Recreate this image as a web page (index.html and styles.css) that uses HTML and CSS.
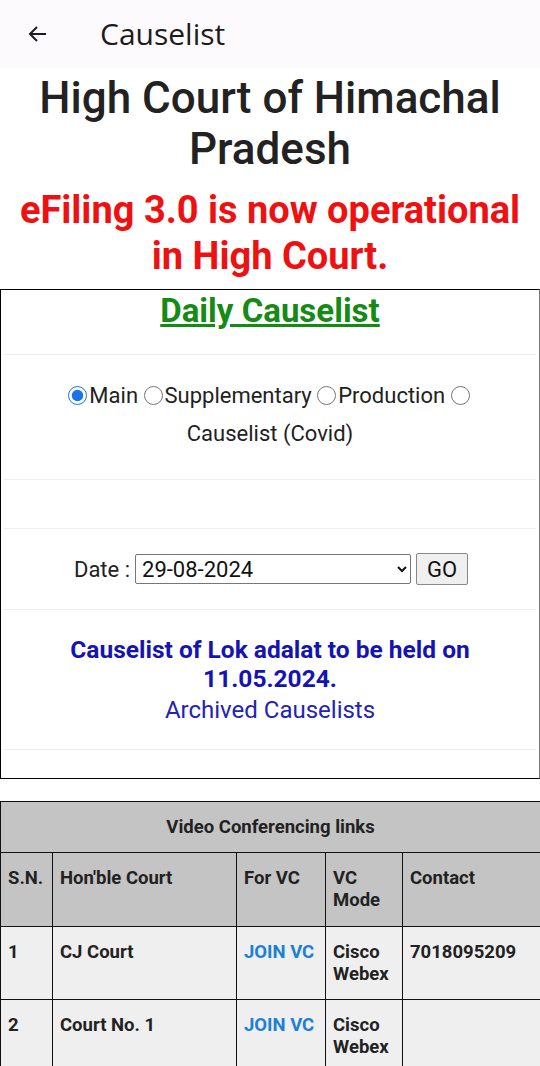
FILE: index.html
```html
<!DOCTYPE html>
<html>
<head>
<meta charset="utf-8">
<link rel="stylesheet" href="styles.css">
</head>
<body>
<div class="appbar">
  <svg class="back" width="24" height="24" viewBox="0 0 24 24"><path d="M20 12H5M11 5l-7 7 7 7" fill="none" stroke="#1d1b20" stroke-width="2"/></svg>
  <span class="apptitle">Causelist</span>
</div>
<h1 class="court">High Court of Himachal Pradesh</h1>
<h2 class="notice">eFiling 3.0 is now operational in High Court.</h2>
<div class="panel">
  <div class="row r-title"><a class="daily">Daily Causelist</a></div>
  <div class="row r-radio">
    <input type="radio" name="t" checked>Main <input type="radio" name="t">Supplementary <input type="radio" name="t">Production <input type="radio" name="t"> <span class="nw">Causelist (Covid)</span>
  </div>
  <div class="row r-empty"></div>
  <div class="row r-date">
    <span class="dlabel">Date :</span>
    <select class="dsel"><option>29-08-2024</option></select>
    <button class="go">GO</button>
  </div>
  <div class="row r-lok">
    <div class="lok">Causelist of Lok adalat to be held on 11.05.2024.</div>
    <div class="arch">Archived Causelists</div>
  </div>
  <div class="row r-end"></div>
</div>
<table class="vc">
  <colgroup><col class="c1"><col class="c2"><col class="c3"><col class="c4"><col class="c5"></colgroup>
  <tr class="cap"><th colspan="5">Video Conferencing links</th></tr>
  <tr class="head"><th>S.N.</th><th>Hon'ble Court</th><th>For VC</th><th>VC Mode</th><th>Contact</th></tr>
  <tr><td>1</td><td>CJ Court</td><td><a class="join">JOIN VC</a></td><td>Cisco Webex</td><td>7018095209</td></tr>
  <tr><td>2</td><td>Court No. 1</td><td><a class="join">JOIN VC</a></td><td>Cisco Webex</td><td></td></tr>
</table>
</body>
</html>
```
FILE: styles.css
```css
html, body { margin: 0; padding: 0; background: #fff; }
body { font-family: Roboto, "Noto Sans", sans-serif; color: #222; width: 540px; overflow: hidden; }
.appbar { height: 68px; background: #fcfafd; display: flex; align-items: center; }
.back { margin-left: 26px; }
.apptitle { font-family: "Open Sans", "Noto Sans", sans-serif; font-size: 30px; color: #1d1b20; margin-left: 50px; margin-top: -2px; }
.court { margin: 5px 10px 0; font-size: 44px; font-weight: 500; text-align: center; line-height: 51px; color: #222; }
.notice { margin: 12px 6px 0; font-size: 38px; font-weight: 700; color: #ee1111; text-align: center; line-height: 46px; }
.panel { margin-top: 10px; border: 1px solid #000; border-right-color: #777; height: 488px; }
.row { margin: 0 3px; border-top: 1px solid #eee; text-align: center; }
.row:first-child { border-top: none; }
.r-title { height: 64px; display: flex; align-items: flex-start; justify-content: center; }
.daily { color: #158a15; font-size: 33px; font-weight: 700; text-decoration: underline; margin-top: 1px; line-height: 40px; }
.r-radio { height: 125px; box-sizing: border-box; padding: 22px 54px 0; font-size: 22px; line-height: 38px; }
.nw { white-space: nowrap; }
.r-radio input { width: 19px; height: 19px; margin: 0 2px 0 0; vertical-align: -2px; accent-color: #1a73e8; }
.r-empty { height: 48px; }
.r-date { height: 80px; display: flex; align-items: center; justify-content: center; font-size: 22px; }
.dlabel { margin-right: 5px; margin-left: 2px; }
.dsel { width: 276px; height: 30px; font-family: Roboto, sans-serif; font-size: 22px; color: #111; border: 1px solid #777; border-radius: 2px; background: #fff; padding: 0 2px; }
.go { margin-left: 5px; height: 32px; width: 52px; font-family: Roboto, sans-serif; font-size: 22px; color: #111; background: #efefef; border: 1px solid #888; border-radius: 2px; padding: 0; }
.r-lok { height: 140px; box-sizing: border-box; padding: 25px 20px 0; }
.lok { color: #1414b4; font-weight: 700; font-size: 24.5px; line-height: 29px; }
.arch { color: #2222b8; font-size: 24px; line-height: 34px; }
.r-end { height: 26px; }
.vc { margin-top: 22px; width: 540px; border-collapse: collapse; table-layout: fixed; font-size: 18.5px; font-weight: 700; }
.c1 { width: 52px; } .c2 { width: 184px; } .c3 { width: 89px; } .c4 { width: 77px; } .c5 { width: 138px; }
.vc th, .vc td { border: 1.5px solid #111; padding: 14px 7px 14px; text-align: left; vertical-align: top; line-height: 22px; color: #222; }
.vc tr.cap th { text-align: center; background: #c4c4c4; padding: 14px 7px 14px; }
.vc tr.head th { background: #c4c4c4; height: 45px; }
.vc td { background: #efefef; height: 44px; }
.join { color: #1e7fd6; }
```
